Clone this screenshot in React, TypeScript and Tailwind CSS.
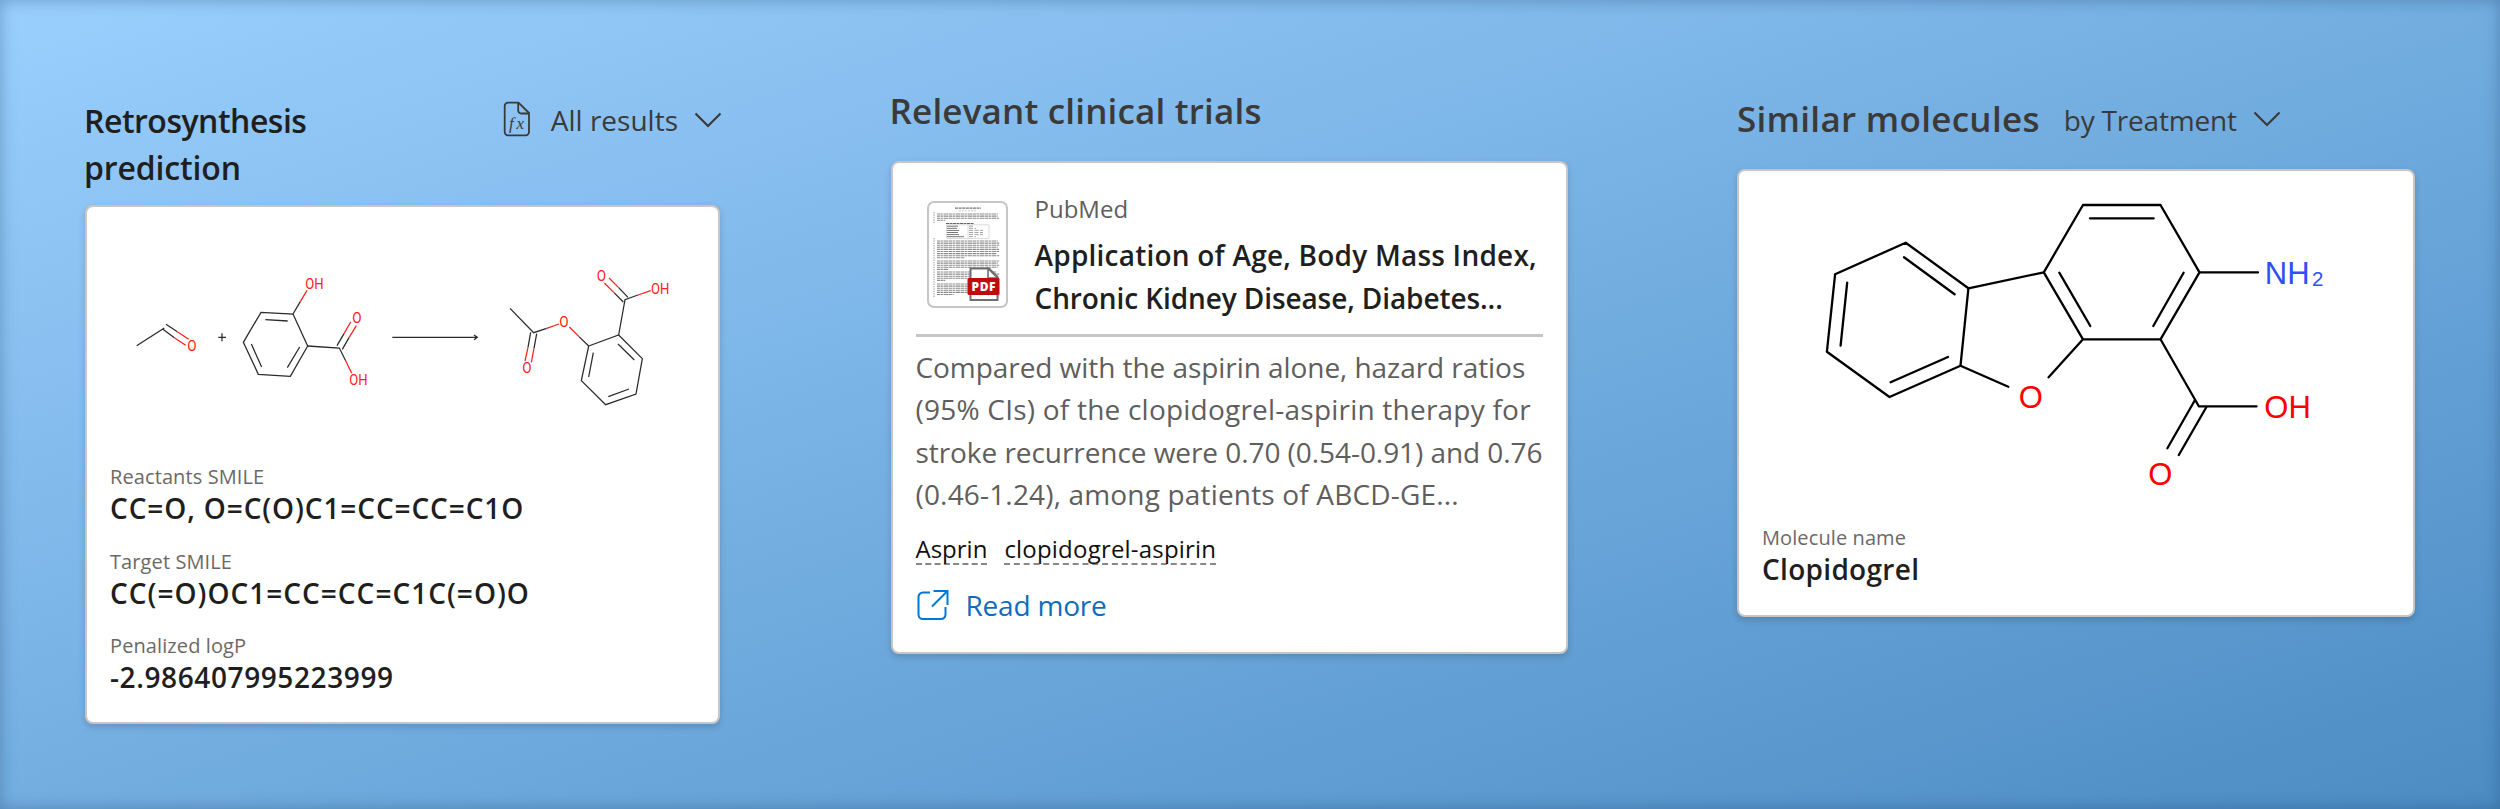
import type { ReactNode } from "react";

const Chevron = () => (
  <svg className="w-[28px] h-[18px]" viewBox="0 0 28 18" fill="none">
    <path d="M1.5 2.5 L14 15 L26.5 2.5" stroke="#3b3a39" strokeWidth="2.2" />
  </svg>
);

const FormulaFile = () => (
  <svg className="-mt-[3px] w-[28px] h-[36px]" viewBox="0 0 28 36" fill="none">
    <path
      d="M5 1.7 H15.5 L26 12 V31 a3.3 3.3 0 0 1 -3.3 3.3 H5 A3.3 3.3 0 0 1 1.7 31 V5 A3.3 3.3 0 0 1 5 1.7 Z"
      stroke="#3b3a39"
      strokeWidth="1.8"
    />
    <path d="M15.2 2 V9.5 a3 3 0 0 0 3 3 H26" stroke="#3b3a39" strokeWidth="1.8" />
    <text
      x="6"
      y="28"
      fontSize="17"
      fontStyle="italic"
      fontFamily="'Liberation Serif', serif"
      fill="#3b3a39"
      textLength="15"
    >
      fx
    </text>
  </svg>
);

const OpenIcon = () => (
  <svg className="w-[34px] h-[34px]" viewBox="0 0 34 34" fill="none">
    <path
      d="M14 4.5 H7 A4.5 4.5 0 0 0 2.5 9 V26.5 A4.5 4.5 0 0 0 7 31 H25 A4.5 4.5 0 0 0 29.5 26.5 V19"
      stroke="#0078d4"
      strokeWidth="2"
    />
    <path d="M17.5 3 H31.5 V17 M31 3.5 L16 18.5" stroke="#0078d4" strokeWidth="2" />
  </svg>
);

const Atom = ({ x, y, children }: { x: number; y: number; children: string }) => (
  <text
    x={x}
    y={y}
    fontSize="43"
    fontFamily="Roboto, sans-serif"
    fill="#ff2020"
    textLength={children === "OH" ? 55 : 28}
    lengthAdjust="spacingAndGlyphs"
  >
    {children}
  </text>
);

const Reaction = () => (
  <svg className="w-[590px] h-[180px]" viewBox="0 0 1770 540" fill="none">
    <g stroke="#2b2b2b" strokeWidth="3.8">
      {/* acetaldehyde */}
      <path d="M80 317 L163 264 M168 253 L202 275 M159 268 L193 293" />
      <path d="M325 292 H348 M336 280 V304" />
      {/* salicylic acid */}
      <path d="M549 222 L593 318 L541 409 L445 403 L400 307 L453 217 Z" />
      <path d="M466 239 L533 243 M424 312 L455 381 M569 321 L532 383" />
      <path d="M549 222 L571 185 M593 318 L688 324 L707 362" />
      <path d="M681 317 L702 281 M697 328 L717 293" />
      {/* arrow */}
      <path d="M847 292 H1100 M1092 285 L1102 292 L1092 299" />
      {/* product */}
      <path d="M1200 205 L1271 278 L1310 265" />
      <path d="M1262 277 L1254 322 M1280 281 L1272 325 M1407 290 L1436 318" />
      <path d="M1436 318 L1526 285 L1597 356 L1578 462 L1487 494 L1414 422 Z" />
      <path d="M1524 312 L1573 360 M1557 447 L1495 470 M1450 338 L1436 411" />
      <path d="M1526 285 L1545 179 L1584 165" />
      <path d="M1554 172 L1526 143 M1540 186 L1512 158" />
    </g>
    <g stroke="#ff2020" strokeWidth="3.8">
      <path d="M202 275 L236 298 M193 293 L227 316" />
      <path d="M571 185 L591 151 M707 362 L725 400" />
      <path d="M702 281 L722 246 M717 293 L739 257" />
      <path d="M1310 265 L1347 252 M1378 261 L1407 290" />
      <path d="M1254 322 L1245 363 M1272 325 L1264 367" />
      <path d="M1526 143 L1497 114 M1512 158 L1483 129 M1584 165 L1622 152" />
    </g>
    <Atom x={232} y={333}>O</Atom>
    <Atom x={586} y={148}>OH</Atom>
    <Atom x={727} y={250}>O</Atom>
    <Atom x={718} y={435}>OH</Atom>
    <Atom x={1348} y={261}>O</Atom>
    <Atom x={1237} y={400}>O</Atom>
    <Atom x={1460} y={123}>O</Atom>
    <Atom x={1623} y={162}>OH</Atom>
  </svg>
);

const Molecule = () => (
  <svg className="w-[540px] h-[330px]" viewBox="0 0 540 330" fill="none">
    <g stroke="#000000" strokeWidth="2.3" strokeLinecap="round" strokeLinejoin="round">
      <path d="M283 25 H360.5 L399.5 92.3 L360.5 159.3 H283 L243.8 92.3 Z" />
      <path d="M290 38.3 H353.7 M259.3 92.7 L290.3 146 M383.6 92.7 L353.3 146" />
      <path d="M168.4 108.3 L105.7 62.7 L35.1 94.3 L26.9 171.7 L89.5 217 L160.5 185.7 Z" />
      <path d="M104 77.3 L154.6 114.3 M47.2 102.7 L40.6 165.7 M90.6 202.3 L148 177" />
      <path d="M168.4 108.3 L243.8 92.3 M160.5 185.7 L208.3 206.7 M283 159.3 L248.6 197.3" />
      <path d="M399.5 92.3 H458 M360.5 159.3 L398.8 226.3 H456.6" />
      <path d="M395 220 L367.4 268.3 M406.3 227.3 L378.8 275" />
    </g>
    <g fontFamily="'Liberation Sans', Arial, sans-serif" fontSize="31" fill="#ff0000">
      <text x="230.7" y="228" textAnchor="middle">O</text>
      <text x="360.2" y="305" textAnchor="middle">O</text>
      <text x="464.3" y="237.6">OH</text>
      <text x="464.8" y="104" fill="#304ff7">NH</text>
      <text x="512" y="105.5" fontSize="20.5" fill="#304ff7">2</text>
    </g>
  </svg>
);

// Row widths of the miniature page's text, top to bottom
const paragraphs = [
  { y: 13, rows: [44, 44, 45, 6] },
  { y: 40, rows: [44, 45, 45, 44, 45, 45, 43, 45, 20] },
  { y: 60, rows: [45, 44, 45, 44, 8] },
  { y: 71, rows: [43, 45, 44, 45, 6] },
  { y: 83, rows: [45, 44, 45, 44, 45, 12] },
];

const PdfThumb = () => (
  <svg className="w-[81px] h-[107px] shrink-0" viewBox="0 0 81 107" fill="none">
    <rect x="1" y="1" width="79" height="105" rx="6" fill="#ffffff" stroke="#c8c6c4" strokeWidth="2" />
    <path d="M28 7.2 H54" stroke="#777777" strokeWidth="1.2" strokeDasharray="3 .6" />
    <path d="M32 9.8 H50" stroke="#bbbbbb" strokeWidth=".8" strokeDasharray="2 1" />
    <path d="M7 11 V23 M7 37 V97" stroke="#999999" strokeWidth="1" strokeDasharray="1.4 1" />
    {paragraphs.map((p) =>
      p.rows.map((w, i) => (
        <path
          key={`${p.y}-${i}`}
          d={`M10 ${p.y + i * 2.1} h${w * 1.38}`}
          stroke="#8c8c8c"
          strokeWidth="1.1"
          strokeDasharray="3.4 .5 2 .6 5 .5"
        />
      ))
    )}
    <path d="M19 22.5 H47" stroke="#666666" strokeWidth="1" strokeDasharray="3 .5" />
    <path d="M19.5 23.8 H62 V37.5 H19.5 Z M41 23.8 V37.5" stroke="#cccccc" strokeWidth=".7" />
    <path d="M20 25.2 H31 M20 27.3 H30 M20 29.4 H32 M20 31.5 H31 M20 33.6 H32 M20 35.7 H37" stroke="#777777" strokeWidth="1" />
    <path d="M42 25.2 H47 M42 27.3 H49 M42 29.4 H56 M42 31.5 H56 M42 33.6 H56 M42 35.7 H49" stroke="#999999" strokeWidth=".9" strokeDasharray="4 1.5" />
    <path d="M43.5 67.5 H62 L70.5 76 V99 H43.5 Z" fill="#ffffff" stroke="#6e6e6e" strokeWidth="2" />
    <path d="M61 67.5 V77 H70.5 Z" fill="#ffffff" stroke="#6e6e6e" strokeWidth="1.6" />
    <rect x="40.5" y="77" width="32" height="17" rx="1.5" fill="#c00b0e" />
    <text
      x="56.5"
      y="90"
      fontSize="12"
      fontWeight="800"
      fontFamily="'Open Sans', sans-serif"
      fill="#ffffff"
      textAnchor="middle"
      textLength="24"
    >
      PDF
    </text>
  </svg>
);

const Card = ({ className, children }: { className: string; children: ReactNode }) => (
  <div
    className={`rounded-[8px] border-2 border-[#c8c6c4] bg-white shadow-[0_3px_7px_rgba(0,0,0,0.16)] ${className}`}
  >
    {children}
  </div>
);

const Field = ({ label, value, spacing }: { label: string; value: string; spacing: string }) => (
  <div>
    <p className="text-[20px] leading-[28px] tracking-[0.1px] text-[#6b6967]">{label}</p>
    <p className={`text-[28px] leading-[34px] font-semibold text-[#201f1e] ${spacing}`}>{value}</p>
  </div>
);

export default function App() {
  return (
    <main className="flex h-[809px] w-[2500px] items-start overflow-hidden bg-[linear-gradient(162deg,#9acffe_0%,#4c8cc3_100%)] pl-[85px] font-['Open_Sans','Noto_Sans',sans-serif] whitespace-nowrap shadow-[inset_0_0_16px_rgba(20,60,100,0.35)]">
      <section className="w-[635px] pt-[97px]">
        <header className="flex h-[94px] justify-between">
          <h2 className="-ml-px text-[32px] leading-[47px] font-semibold text-[#201f1e]">
            <span className="tracking-[-0.5px]">Retrosynthesis</span>
            <br />
            <span className="tracking-[-0.15px]">prediction</span>
          </h2>
          <div className="-mr-[2px] flex h-[40px] items-center pt-[6px] text-[28px] text-[#3b3a39]">
            <FormulaFile />
            <span className="ml-[20px]">All results</span>
            <span className="ml-[16px]">
              <Chevron />
            </span>
          </div>
        </header>
        <Card className="mt-[14px] h-[519px] px-[23px] pt-[33px]">
          <Reaction />
          <div className="mt-[43px] flex flex-col gap-[22.7px]">
            <Field
              label="Reactants SMILE"
              value="CC=O, O=C(O)C1=CC=CC=C1O"
              spacing="tracking-[0.9px]"
            />
            <Field
              label="Target SMILE"
              value="CC(=O)OC1=CC=CC=C1C(=O)O"
              spacing="tracking-[1.02px]"
            />
            <Field label="Penalized logP" value="-2.986407995223999" spacing="tracking-[0.6px]" />
          </div>
        </Card>
      </section>

      <section className="ml-[170.5px] w-[677.5px] pt-[87px]">
        <h2 className="-ml-px text-[35px] leading-[48px] font-semibold tracking-[0.18px] text-[#3b3a39]">
          Relevant clinical trials
        </h2>
        <Card className="mt-[26px] h-[493px] px-[23px] pt-[29px]">
          <div className="flex h-[142px]">
            <div className="mt-[9px] ml-[11px]">
              <PdfThumb />
            </div>
            <div className="ml-[27px]">
              <p className="text-[24px] leading-[34px] text-[#605e5c]">PubMed</p>
              <p className="mt-[8px] text-[28px] leading-[42.5px] font-semibold text-[#201f1e]">
                <span className="tracking-[0.22px]">Application of Age, Body Mass Index,</span>
                <br />
                <span className="tracking-[-0.1px]">Chronic Kidney Disease, Diabetes...</span>
              </p>
            </div>
          </div>
          <hr className="h-[3px] border-0 bg-[#c8c6c4]" />
          <p className="mt-[9px] text-[28px] leading-[42.4px] text-[#605e5c]">
            <span className="tracking-[-0.06px]">Compared with the aspirin alone, hazard ratios</span>
            <br />
            <span className="tracking-[0.22px]">(95% CIs) of the clopidogrel-aspirin therapy for</span>
            <br />
            <span className="tracking-[-0.06px]">stroke recurrence were 0.70 (0.54-0.91) and 0.76</span>
            <br />
            <span className="tracking-[0.17px]">(0.46-1.24), among patients of ABCD-GE...</span>
          </p>
          <div className="mt-[19px] flex gap-[17px] text-[24px] leading-[28px] text-[#11100f]">
            <span className="border-b-2 border-dashed border-[#8a8886]">Asprin</span>
            <span className="border-b-2 border-dashed border-[#8a8886] tracking-[0.2px]">
              clopidogrel-aspirin
            </span>
          </div>
          <a className="mt-[20px] flex items-center gap-[16px] text-[28px] leading-[40px] tracking-[-0.2px] text-[#0f6cbd]">
            <OpenIcon />
            Read more
          </a>
        </Card>
      </section>

      <section className="ml-[169px] w-[678px] pt-[95px]">
        <header className="flex h-[48px] items-center">
          <h2 className="text-[35px] leading-[48px] font-semibold tracking-[0.3px] text-[#3b3a39]">
            Similar molecules
          </h2>
          <span className="mt-[2px] ml-[24px] text-[28px] leading-[40px] tracking-[-0.2px] text-[#3b3a39]">
            by Treatment
          </span>
          <span className="ml-[16px]">
            <Chevron />
          </span>
        </header>
        <Card className="mt-[26px] h-[448px] px-[23px] pt-[9px]">
          <div className="pl-[38px]">
            <Molecule />
          </div>
          <div className="mt-[14px]">
            <Field label="Molecule name" value="Clopidogrel" spacing="tracking-[0.3px]" />
          </div>
        </Card>
      </section>
    </main>
  );
}
